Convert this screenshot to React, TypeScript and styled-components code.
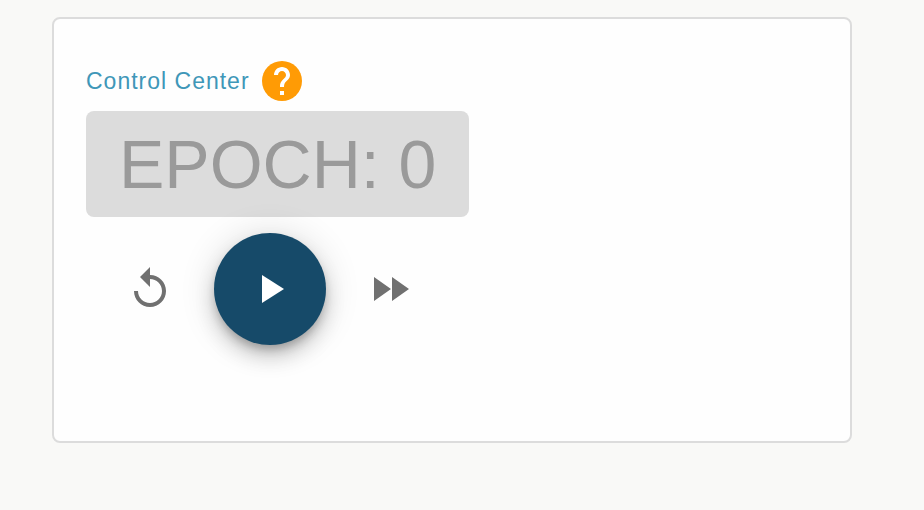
import React from "react";
import styled, { createGlobalStyle } from "styled-components";

const GlobalStyle = createGlobalStyle`
  * { box-sizing: border-box; }
  body {
    margin: 0;
    background: #f9f9f7;
    font-family: "Liberation Sans", Arial, sans-serif;
  }
`;

const Page = styled.main`
  padding: 17px 72px 17px 52px;
`;

const Card = styled.section`
  display: flex;
  flex-direction: column;
  align-items: flex-start;
  padding: 42px 32px 96px;
  border: 2px solid #dcdcdc;
  border-radius: 8px;
  background: #fefefe;
`;

const Header = styled.header`
  display: flex;
  align-items: center;
  gap: 12px;
  height: 40px;
`;

const Title = styled.h1`
  margin: 0;
  color: #3f97b8;
  font-size: 23px;
  font-weight: 400;
  letter-spacing: 1px;
  line-height: 32px;
`;

const IconButton = styled.button`
  display: flex;
  align-items: center;
  justify-content: center;
  padding: 0;
  border: 0;
  background: none;
  color: #707070;
  cursor: pointer;
`;

const HelpButton = styled(IconButton)`
  width: 40px;
  height: 40px;
  color: #ff9b05;
`;

const Epoch = styled.output`
  margin-top: 10px;
  padding: 0 33px;
  border-radius: 8px;
  background: #dcdcdc;
  color: #9a9a9a;
  font-size: 68px;
  line-height: 106px;
  white-space: nowrap;
`;

const Controls = styled.div`
  display: flex;
  align-items: center;
  gap: 16px;
  margin-top: 16px;
  padding-left: 32px;
`;

const SideButton = styled(IconButton)`
  width: 64px;
  height: 64px;
`;

const PlayButton = styled(IconButton)`
  width: 112px;
  height: 112px;
  margin: 0 16px;
  border-radius: 50%;
  background: #164a69;
  color: #fff;
  box-shadow: 0 6px 10px -2px rgba(0, 0, 0, 0.24), 0 12px 20px rgba(0, 0, 0, 0.16),
    0 2px 36px rgba(0, 0, 0, 0.14);
`;

const Glyph = ({ d }: { d: string }) => (
  <svg width="48" height="48" viewBox="0 0 24 24" fill="currentColor" aria-hidden="true">
    <path d={d} />
  </svg>
);

const HelpIcon = () => (
  <svg width="40" height="40" viewBox="2 2 20 20" aria-hidden="true">
    <circle cx="12" cy="12" r="10" fill="currentColor" />
    <path
      fill="#fff"
      d="M11 19h2v-2h-2v2zm4.070-7.750l-.9.920C13.450 12.900 13 13.500 13 15h-2v-.5c0-1.100.45-2.100 1.170-2.830l1.240-1.260c.37-.36.59-.86.59-1.410 0-1.100-.9-2-2-2s-2 .9-2 2H8c0-2.210 1.790-4 4-4s4 1.790 4 4c0 .88-.36 1.680-.93 2.250z"
    />
  </svg>
);

const replay =
  "M12 5V1L7 6l5 5V7c3.310 0 6 2.690 6 6s-2.690 6-6 6-6-2.690-6-6H4c0 4.420 3.580 8 8 8s8-3.580 8-8-3.580-8-8-8z";
const play = "M8 5v14l11-7z";
const forward = "M4 18l8.500-6L4 6v12zm9-12v12l8.500-6L13 6z";

export default function App() {
  return (
    <>
      <GlobalStyle />
      <Page>
        <Card>
          <Header>
            <Title>Control Center</Title>
            <HelpButton type="button" aria-label="Help">
              <HelpIcon />
            </HelpButton>
          </Header>
          <Epoch>EPOCH: 0</Epoch>
          <Controls>
            <SideButton type="button" aria-label="Reset">
              <Glyph d={replay} />
            </SideButton>
            <PlayButton type="button" aria-label="Play">
              <Glyph d={play} />
            </PlayButton>
            <SideButton type="button" aria-label="Fast forward">
              <Glyph d={forward} />
            </SideButton>
          </Controls>
        </Card>
      </Page>
    </>
  );
}
